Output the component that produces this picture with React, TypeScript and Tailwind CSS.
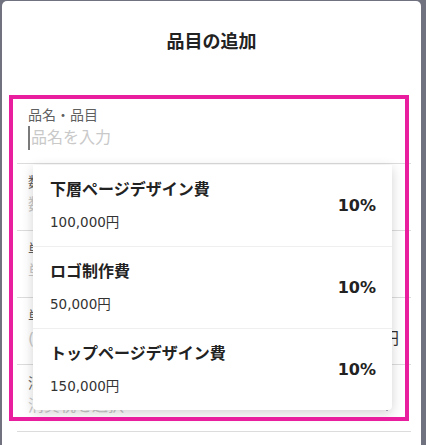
import React from "react";

const font = { fontFamily: '"DejaVu Sans", "Noto Sans CJK JP", sans-serif' };

type Item = { name: string; price: string; tax: string };

const items: Item[] = [
  { name: "下層ページデザイン費", price: "100,000円", tax: "10%" },
  { name: "ロゴ制作費", price: "50,000円", tax: "10%" },
  { name: "トップページデザイン費", price: "150,000円", tax: "10%" },
];

function Arrow() {
  return (
    <svg width="6" height="4" viewBox="0 0 6 4" className="mr-[10px] mt-[6px] shrink-0">
      <polygon points="0,0 6,0 3,4" fill="#2b2f5c" />
    </svg>
  );
}

// 入力欄の1行
function Field({
  label,
  placeholder,
  caret,
  suffix,
}: {
  label: string;
  placeholder: string;
  caret?: boolean;
  suffix?: React.ReactNode;
}) {
  return (
    <div className="h-[67px] border-b border-[#dcdcdc] px-[11px] pt-[8px]">
      <div className="text-[14px] leading-[20px] text-[#5f5f5f]">{label}</div>
      <div className="mt-[1px] flex h-[24px] items-center">
        {caret && <span className="mr-[1px] h-[24px] w-[2px] bg-[#7a7a7a]" />}
        <span className="flex-1 text-[16px] leading-[24px] text-[#c9c9c9]">{placeholder}</span>
        {suffix}
      </div>
    </div>
  );
}

export default function App() {
  return (
    <div className="h-[445px] w-[426px] overflow-hidden bg-[#70737f] pl-[2px] pt-[1px]" style={font}>
      <div className="relative h-[444px] w-[419px] rounded-t-[5px] bg-white">
        <div className="flex h-[80px] items-center justify-center text-[18px] font-bold text-[#222]">
          品目の追加
        </div>

        <div className="pl-[15px] pr-[10px] pt-[16px]">
          <Field label="品名・品目" placeholder="品名を入力" caret />
          <Field label="数量" placeholder="数量を入力" />
          <Field label="単位" placeholder="単位を選択" suffix={<Arrow />} />
          <Field
            label="単価"
            placeholder="(例) 10,000"
            suffix={<span className="mr-[1px] text-[16px] leading-[24px] text-[#333]">円</span>}
          />
          <Field label="消費税" placeholder="消費税を選択" suffix={<Arrow />} />
        </div>

        {/* 候補リスト */}
        <div className="absolute left-[31px] top-[164px] w-[359px] rounded-b-[4px] bg-white shadow-[0_3px_12px_rgba(0,0,0,0.18)]">
          {items.map((item, i) => (
            <div
              key={item.name}
              className={
                i < items.length - 1
                  ? "flex h-[82px] items-center justify-between border-b border-[#efefef] pl-[17px] pr-[16px]"
                  : "flex h-[81px] items-center justify-between pl-[17px] pr-[16px]"
              }
            >
              <div>
                <div className="text-[16px] font-bold leading-[22px] text-[#222]">{item.name}</div>
                <div className="mt-[11px] text-[13.5px] leading-[20px] text-[#333]">{item.price}</div>
              </div>
              <div className="text-[16px] font-bold text-[#222]">{item.tax}</div>
            </div>
          ))}
        </div>

        {/* 強調枠 */}
        <div className="pointer-events-none absolute left-[7px] top-[94px] h-[326px] w-[400px] border-[4px] border-[#e91e9e]" />
      </div>
    </div>
  );
}
